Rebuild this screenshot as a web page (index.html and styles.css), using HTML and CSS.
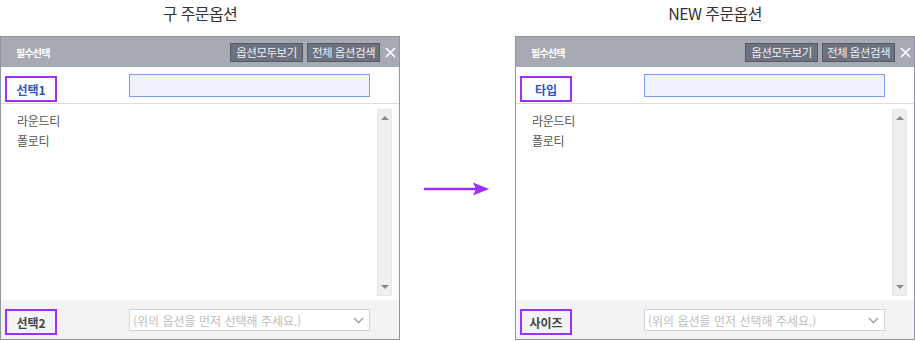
FILE: index.html
```html
<!DOCTYPE html>
<html lang="ko">
<head>
    <meta charset="UTF-8">
    <meta name="viewport" content="width=device-width, initial-scale=1.0">
    <title>주문옵션 비교</title>
    <link rel="stylesheet" href="styles.css">
</head>
<body>
    <div class="stage">
        <!-- old option layer -->
        <div class="side">
            <h2 class="title">구 주문옵션</h2>
            <div class="panel">
                <div class="panel-head">
                    <span class="head-label">필수선택</span>
                    <button class="head-btn">옵션모두보기</button>
                    <button class="head-btn">전체 옵션검색</button>
                    <span class="close">
                        <svg width="11" height="11" viewBox="0 0 11 11"><path d="M1 1L10 10M10 1L1 10" stroke="#fff" stroke-width="1.6"/></svg>
                    </span>
                </div>
                <div class="row-top">
                    <div class="opt-label blue">선택1</div>
                    <input class="search" type="text">
                </div>
                <div class="list">
                    <ul class="items">
                        <li>라운드티</li>
                        <li>폴로티</li>
                    </ul>
                    <div class="scroll">
                        <span class="tri up"></span>
                        <span class="tri down"></span>
                    </div>
                </div>
                <div class="row-bottom">
                    <div class="opt-label">선택2</div>
                    <div class="select">
                        <span>(위의 옵션을 먼저 선택해 주세요.)</span>
                        <svg width="11" height="7" viewBox="0 0 11 7"><path d="M1 1L5.5 5.5L10 1" fill="none" stroke="#9a9a9a" stroke-width="1.3"/></svg>
                    </div>
                </div>
            </div>
        </div>

        <div class="arrow-col">
            <svg class="arrow" width="66" height="16" viewBox="0 0 66 16"><path d="M0 8H52" stroke="#9b30ff" stroke-width="2.4"/><path d="M49 1.5L65 8L49 14.5L52 8Z" fill="#9b30ff"/></svg>
        </div>

        <!-- new option layer -->
        <div class="side">
            <h2 class="title">NEW 주문옵션</h2>
            <div class="panel">
                <div class="panel-head">
                    <span class="head-label">필수선택</span>
                    <button class="head-btn">옵션모두보기</button>
                    <button class="head-btn">전체 옵션검색</button>
                    <span class="close">
                        <svg width="11" height="11" viewBox="0 0 11 11"><path d="M1 1L10 10M10 1L1 10" stroke="#fff" stroke-width="1.6"/></svg>
                    </span>
                </div>
                <div class="row-top">
                    <div class="opt-label blue">타입</div>
                    <input class="search" type="text">
                </div>
                <div class="list">
                    <ul class="items">
                        <li>라운드티</li>
                        <li>폴로티</li>
                    </ul>
                    <div class="scroll">
                        <span class="tri up"></span>
                        <span class="tri down"></span>
                    </div>
                </div>
                <div class="row-bottom">
                    <div class="opt-label">사이즈</div>
                    <div class="select">
                        <span>(위의 옵션을 먼저 선택해 주세요.)</span>
                        <svg width="11" height="7" viewBox="0 0 11 7"><path d="M1 1L5.5 5.5L10 1" fill="none" stroke="#9a9a9a" stroke-width="1.3"/></svg>
                    </div>
                </div>
            </div>
        </div>
    </div>
</body>
</html>
```

FILE: styles.css
```css
/* Page */
body {
    margin: 0;
    padding: 0;
    font-family: "Noto Sans CJK KR", "Noto Sans", sans-serif;
    color: #333;
    background-color: #fff;
}

.stage {
    display: flex;
    width: 915px;
    height: 341px;
}

.side {
    width: 400px;
    display: flex;
    flex-direction: column;
}

.title {
    margin: 0;
    height: 36px;
    line-height: 26px;
    font-size: 16px;
    font-weight: normal;
    letter-spacing: -0.6px;
    text-align: center;
    color: #333;
}

/* Option layer */
.panel {
    border: 1px solid #8f949e;
    height: 302px;
    display: flex;
    flex-direction: column;
}

.panel-head {
    height: 30px;
    background-color: #a5aab3;
    display: flex;
    align-items: center;
    padding: 0 3px 0 15px;
}

.head-label {
    font-size: 10px;
    font-weight: bold;
    letter-spacing: -0.8px;
    color: #fff;
    margin-right: auto;
}

.head-btn {
    width: 73px;
    height: 19px;
    margin-left: 4px;
    padding: 0;
    font-family: inherit;
    font-size: 11.5px;
    letter-spacing: -0.5px;
    line-height: 17px;
    color: #eef0f3;
    background-color: #6c7280;
    border: 1px solid #545964;
    border-radius: 0;
}

.close {
    display: flex;
    margin-left: 5px;
    margin-top: 1px;
}

.row-top {
    height: 36px;
    border-bottom: 1px solid #dcdcdc;
    display: flex;
    align-items: flex-start;
    padding-left: 4px;
}

.opt-label {
    box-sizing: border-box;
    width: 52px;
    height: 26px;
    margin-top: 9px;
    border: 2px solid #9b30ff;
    display: flex;
    align-items: center;
    justify-content: center;
    font-size: 12px;
    font-weight: bold;
    color: #444;
}

.opt-label.blue {
    color: #2d55c8;
}

.search {
    box-sizing: border-box;
    width: 241px;
    height: 23px;
    margin: 7px 0 0 72px;
    background-color: #eef2fc;
    border: 1px solid #7d9bea;
    padding: 0;
    outline: none;
}

.list {
    flex: 1;
    display: flex;
}

.items {
    flex: 1;
    list-style: none;
    margin: 0;
    padding: 7px 0 0 16px;
}

.items li {
    height: 20px;
    line-height: 20px;
    font-size: 12px;
    letter-spacing: -0.3px;
    color: #555;
}

.scroll {
    box-sizing: border-box;
    width: 15px;
    margin: 5px 7px 4px 0;
    background-color: #efefef;
    border: 1px solid #e6e6e6;
    display: flex;
    flex-direction: column;
    justify-content: space-between;
    align-items: center;
    padding: 6px 0;
}

.tri {
    width: 0;
    height: 0;
    border-left: 4px solid transparent;
    border-right: 4px solid transparent;
}

.tri.up {
    border-bottom: 4px solid #8a8a8a;
}

.tri.down {
    border-top: 4px solid #8a8a8a;
}

.row-bottom {
    height: 39px;
    background-color: #f3f3f3;
    display: flex;
    align-items: flex-start;
    padding-left: 4px;
}

.select {
    box-sizing: border-box;
    width: 241px;
    height: 22px;
    margin: 9px 0 0 72px;
    background-color: #fff;
    border: 1px solid #d3d3e0;
    display: flex;
    align-items: center;
    justify-content: space-between;
    padding: 0 5px 0 3px;
    font-size: 12px;
    color: #bdbdbd;
}

/* Arrow between layers */
.arrow-col {
    width: 115px;
}

.arrow {
    display: block;
    margin: 181px 0 0 24px;
}
```
